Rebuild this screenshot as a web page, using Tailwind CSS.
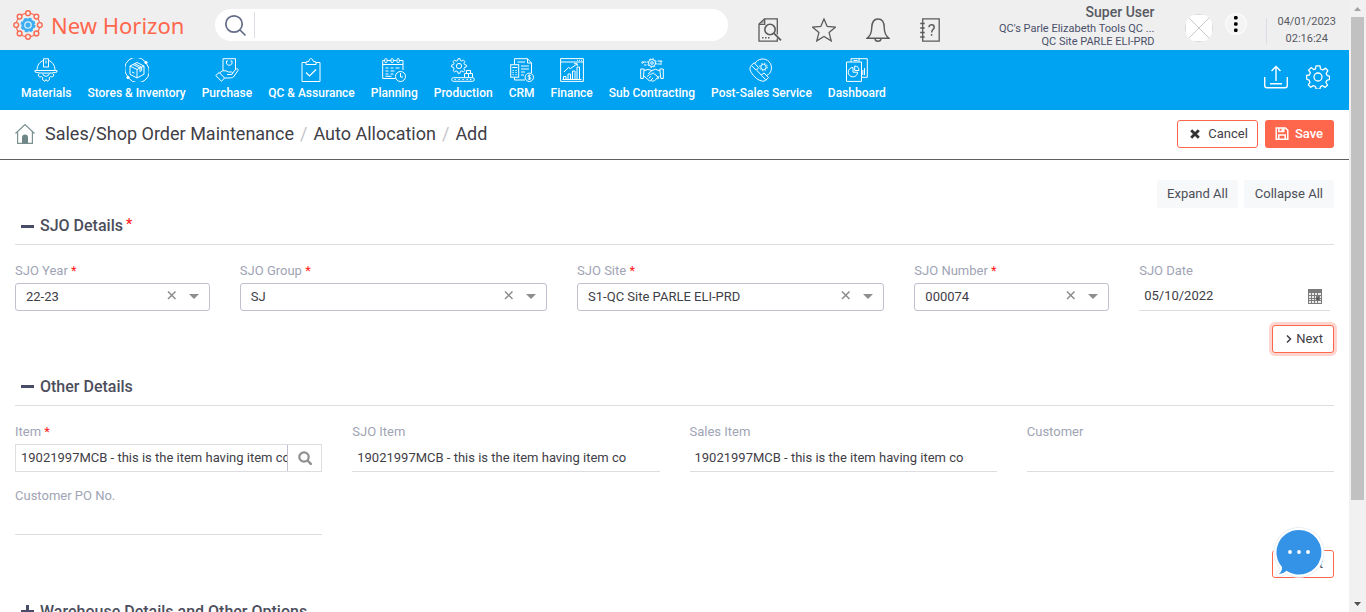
<!DOCTYPE html>
<html lang="en">
<head>
<meta charset="utf-8">
<meta name="viewport" content="width=device-width, initial-scale=1">
<title>New Horizon - Auto Allocation</title>
<script src="https://cdn.jsdelivr.net/npm/@tailwindcss/browser@4"></script>
</head>
<body class="flex h-screen overflow-hidden bg-white font-['Roboto',sans-serif] text-[13px] leading-5 text-[#3f4047]">

<div class="relative flex h-full min-w-0 flex-1 flex-col overflow-hidden">

  <!-- Top bar -->
  <header class="flex h-[50px] shrink-0 items-center bg-[#efefef] pl-[13px] pr-[13px]">
    <a href="#" class="flex w-[202px] shrink-0 items-center gap-2 font-['Noto_Sans',sans-serif] text-[22px] leading-8 text-[#ff674d]">
      <svg class="size-[30px] shrink-0" viewBox="0 0 30 30" fill="none" stroke="#f76b54" stroke-width="1.4">
        <circle cx="15" cy="15" r="11.8" stroke-width="1.2"/>
        <g fill="#efefef">
          <circle cx="15" cy="3.200" r="2.400"/><circle cx="23.400" cy="6.600" r="2.400"/><circle cx="26.800" cy="15" r="2.400"/><circle cx="23.400" cy="23.400" r="2.400"/>
          <circle cx="15" cy="26.800" r="2.400"/><circle cx="6.600" cy="23.400" r="2.400"/><circle cx="3.200" cy="15" r="2.400"/><circle cx="6.600" cy="6.600" r="2.400"/>
        </g>
        <circle cx="15" cy="15" r="6.500" fill="#3eaef0" stroke="#3eaef0" stroke-width="2" stroke-dasharray="2.900 2.205"/>
        <circle cx="15" cy="15" r="6.200" fill="#3eaef0" stroke="none"/>
        <circle cx="15" cy="15" r="3.200" stroke="#d9eefb" stroke-width="1.300"/>
      </svg>
      <span class="whitespace-nowrap">New Horizon</span>
    </a>
    <label class="flex h-8 w-[513px] items-center rounded-full bg-white">
      <svg class="ml-2 size-6 shrink-0" viewBox="0 0 24 24" fill="none" stroke="#636c88" stroke-width="1.7"><circle cx="11" cy="11" r="8.2"/><path d="M17 17l5 5" stroke-linecap="round"/></svg>
      <input type="search" aria-label="Search" class="ml-[7px] h-[26px] min-w-0 flex-1 border-l border-[#dddde6] px-3 outline-none">
    </label>
    <div class="ml-[30px] flex items-center gap-[30px] pt-2.5 text-[#5b5b5d]">
      <button aria-label="Search document"><svg class="block size-6" viewBox="0 0 24 24" fill="none" stroke="currentColor" stroke-width="1.3"><path d="M19.3 16.5V.8H6.5L1 6v17.2h18.3v-3"/><path d="M6.7 1v5.3H1"/><path d="M2 5.3L5.8 1.8V5.3z" fill="currentColor" fill-opacity=".5" stroke="none"/><circle cx="12" cy="11.5" r="5.2" stroke-width="1.6" fill="#efefef"/><path d="M16 15.3l7 7" stroke-width="1.8"/><path d="M4 19.8h1.5M7 19.8h1.5M10 19.8h1.5" stroke-width="1.6"/></svg></button>
      <button aria-label="Favourites"><svg class="block size-6" viewBox="0 0 24 24" fill="none" stroke="currentColor" stroke-width="1.3"><path d="M12 .9l3.2 7.6 8.1.7-6.2 5.4 2.1 8.3-7.2-4.4-7.2 4.4 2.1-8.3L.7 9.2l8.1-.7z"/></svg></button>
      <button aria-label="Notifications"><svg class="block size-6" viewBox="0 0 24 24" fill="none" stroke="currentColor" stroke-width="1.4"><path d="M1 20.3c2.700-2 4.700-4.200 4.700-10.300C5.700 4 8.500 1 12 1s6.300 3 6.300 9c0 6.100 2 8.300 4.700 10.300z"/><path d="M9 20.500a3 2.800 0 0 0 6 0"/></svg></button>
      <button aria-label="Help"><svg class="block h-6 w-5" viewBox="3 0 20 24" fill="none" stroke="currentColor" stroke-width="1.3"><path d="M5.700.8h16.500v22.400H5.700z"/><path d="M3.200 5.500h4.500M3.200 10h4.500M3.200 14.500h4.500M3.200 19h4.500" stroke-width="1.5"/><path d="M12 9.200c0-3.400 5.200-3.400 5.200.1 0 2.300-2.600 2.300-2.600 5.100M14.600 16v1.700" stroke-width="1.5"/></svg></button>
    </div>
    <div class="ml-auto text-right text-[11px] leading-[13px] text-[#4a506a]">
      <div class="pt-px text-[14px] leading-[18px] font-medium text-[#575962]">Super User</div>
      <div class="pt-px">QC's Parle Elizabeth Tools QC ...</div>
      <div>QC Site PARLE ELI-PRD</div>
    </div>
    <div role="img" aria-label="Profile picture" class="ml-[31px] mt-1.5 size-7 overflow-hidden rounded-full bg-white">
      <svg class="size-7" viewBox="0 0 28 28" stroke="#c9c9c9" fill="none"><path d="M4 4l20 20M24 4L4 24"/><path d="M0 .5h28M0 27.500h28M.5 0v28M27.500 0v28" stroke="#d8d8d8"/></svg>
    </div>
    <button aria-label="More" class="ml-3 mb-0.5 flex size-[22px] items-center justify-center rounded-full border border-white/70 bg-[#f4f4f4]">
      <svg class="h-[18px] w-1" viewBox="0 0 4 18" fill="#000"><rect y="1" width="3.600" height="3.600" rx="1.300"/><rect y="7.200" width="3.600" height="3.600" rx="1.300"/><rect y="13.400" width="3.600" height="3.600" rx="1.300"/></svg>
    </button>
    <div class="ml-[19px] mt-3 h-[26px] w-px bg-[#dcdce6]"></div>
    <div class="ml-2.5 mt-2.5 text-center text-[11px] leading-[17px] text-[#575962]">04/01/2023<br>02:16:24</div>
  </header>

  <!-- Module navigation -->
  <nav class="flex h-[60px] shrink-0 items-start bg-[#00a2f2] pl-[13px] pr-[19px] text-[12px] leading-4 font-medium text-white">
    <a href="#" class="flex flex-col items-center gap-[3px] px-2 pt-2 whitespace-nowrap"><svg class="size-6" viewBox="0 0 24 24" fill="none" stroke="#fff" stroke-width="1"><path d="M1 12.500h22v1.500c-3 1.500-19 1.500-22 0z"/><path d="M3 12.500C3 7 6 3.500 9.500 2.500M21 12.500c0-5.500-3-9-6.500-10M9.500 9V.8h5V9zM12 2.500v3"/><path d="M5.500 15.500L4 17l1.500 2 2-.4 1.300 1-.3 2 2.300 1.700 1.200-1.800 1.200 1.800 2.300-1.700-.3-2 1.300-1 2 .4L20 17l-1.500-1.500M8.500 15.500a3.600 3.600 0 0 0 7 0"/></svg>Materials</a>
    <a href="#" class="flex flex-col items-center gap-[3px] px-2 pt-2 whitespace-nowrap"><svg class="size-6" viewBox="0 0 24 24" fill="none" stroke="#fff" stroke-width="1"><path d="M20 3.500A11.300 11.300 0 0 0 2.300 18M4 20.500A11.300 11.300 0 0 0 21.700 6"/><circle cx="21" cy="4.500" r="1.200" fill="#fff"/><circle cx="3" cy="19.500" r="1.200" fill="#fff"/><path d="M5 8l7-3.500L19 8v8.300L12 20l-7-3.700zM5 8l7 3.500L19 8M12 11.500V20M8 6.500l7 3.500v3.500l1.700-.9V9.200L9.700 5.700M7 14l2.500 1.200"/></svg>Stores &amp; Inventory</a>
    <a href="#" class="flex flex-col items-center gap-[3px] px-2 pt-2 whitespace-nowrap"><svg class="size-6" viewBox="0 0 24 24" fill="none" stroke="#fff" stroke-width="1"><path d="M8 13V.7h12.500V12"/><path d="M11.500 3v2c0 3 5.500 3 5.500 0V3M11.500 3h1.500M15.500 3H17"/><path d="M.7 17.500l3.500-3L9.500 20 6.500 23.300z"/><path d="M4.500 15l3-2.200h3.500l2.500 1.200h3c1.500 0 1.500 2.500 0 2.500H12M16.500 16.500l4-5c1.500-1.300 3.300-.5 2.500 1L18.500 19c-1 1-4.500 1-9 1"/></svg>Purchase</a>
    <a href="#" class="flex flex-col items-center gap-[3px] px-2 pt-2 whitespace-nowrap"><svg class="size-6" viewBox="0 0 24 24" fill="none" stroke="#fff" stroke-width="1"><path d="M7 4.500H3v19h18v-19h-4"/><path d="M7 6.500V4l2.800-.7c.5-3.500 3.900-3.500 4.400 0L17 4v2.500z"/><path d="M7 14.500l3.500 3.500 6.500-6.500" stroke-width="1.200"/></svg>QC &amp; Assurance</a>
    <a href="#" class="flex flex-col items-center gap-[3px] px-2 pt-2 whitespace-nowrap"><svg class="size-6" viewBox="0 0 24 24" fill="none" stroke="#fff" stroke-width="1"><path d="M13.500 20.500H.7v-18h2M5 2.500h4M11.500 2.500h3M17 2.500h4V12M.7 6.500H21"/><rect x="2.700" y=".6" width="2.300" height="4" rx="1"/><rect x="9" y=".6" width="2.300" height="4" rx="1"/><rect x="15" y=".6" width="2.300" height="4" rx="1"/><path d="M3.500 10h3M8.500 10h3M13.500 10h4M3.500 13h3M8.500 13h4M3.500 16h3M8.500 16h3M3.500 18.300h6"/><circle cx="18.500" cy="18.500" r="5"/><path d="M18.500 15v4h2.500"/></svg>Planning</a>
    <a href="#" class="flex flex-col items-center gap-[3px] px-2 pt-2 whitespace-nowrap"><svg class="size-6" viewBox="0 0 24 24" fill="none" stroke="#fff" stroke-width="1"><path d="M7 .7h2l.4 1.800 1.500.6 1.600-1 1.400 1.400-1 1.600.6 1.500 1.800.4v2l-1.800.4-.6 1.500 1 1.600-1.400 1.400-1.600-1-1.500.6L9 15.300H7l-.4-1.800-1.500-.6-1.600 1-1.400-1.400 1-1.600-.6-1.500L.7 9V7l1.800-.4.6-1.500-1-1.600 1.400-1.400 1.600 1 1.500-.6z"/><circle cx="8" cy="8" r="2.600"/><rect x=".7" y="19.700" width="22.600" height="3.600" rx="1.800"/><path d="M3.500 21.500h1.300M7.500 21.500h1.300M11.500 21.500h1.300M15.500 21.500h1.300M19 21.500h1.300" /><path d="M13.500 19.500v-4h4v4M17.500 19.500v-4h4v4M15.500 15.500v-3h4v3"/></svg>Production</a>
    <a href="#" class="flex flex-col items-center gap-[3px] px-2 pt-2 whitespace-nowrap"><svg class="size-6" viewBox="0 0 24 24" fill="none" stroke="#fff" stroke-width="1"><path d="M4.500 6V.7h13L21.500 5v10M17.500.7V5h4M4.500 19.500V22H15"/><rect x=".7" y="6.700" width="8" height="12.500"/><path d="M2.300 9.500h5M2.500 12.500h1.200M5.500 12.500h1.200M2.500 14.500h1.200M5.500 14.500h1.200M2.500 16.700h1.200M5.500 16.700h1.200M7.500 4H15M11 8h8M11 11h8M11 14h4M11 17h3"/><circle cx="19.300" cy="19.300" r="4.200"/><path d="M20.800 17.800c-1-1-3-.7-2.700.6.3 1.100 2.500.6 2.700 1.800.1 1.200-2 1.500-3 .5M19.300 16.500v5.600"/></svg>CRM</a>
    <a href="#" class="flex flex-col items-center gap-[3px] px-2 pt-2 whitespace-nowrap"><svg class="size-6" viewBox="0 0 24 24" fill="none" stroke="#fff" stroke-width="1"><path d="M.6.6h22.800v22.800H.6zM.6 4h22.800M17 2.300h1M19 2.300h1M21 2.300h1" /><path d="M3.500 21.500v-3h2.500v3M8 21.500V16h2.500v5.500M12.500 21.500V13H15v8.500M17 21.500V9h2.500v12.500M2.500 21.500h19M4 14l4.500-4.500 2 1L17 6M14 5.700h3.200V8"/></svg>Finance</a>
    <a href="#" class="flex flex-col items-center gap-[3px] px-2 pt-2 whitespace-nowrap"><svg class="size-6" viewBox="0 0 24 24" fill="none" stroke="#fff" stroke-width="1"><circle cx="12" cy="5" r="3.500"/><circle cx="12" cy="5" r="4.300" stroke-dasharray="1.700 1.670"/><circle cx="12" cy="5" r="1.300"/><path d="M6.500 4H3M6.500 7H4M17.500 3H20M17.500 6H22"/><circle cx="2.500" cy="4.500" r=".8"/><circle cx="21" cy="3.500" r=".8"/><path d="M.7 11v9.500h2.500l1-9.500zM23.300 11v9.500h-2.500l-1-9.500z"/><path d="M4.200 12.500L8 11.500l4 1 3.500-1.200 4.300 1.500M12 12.500l-3.500 3c1 1.500 3 1 4.500-.7l5.500 4.500c.8 1-.7 2-1.700 1M4 18l5 4.500c1 .7 2 .3 2-.5M7 18.500l2-1.500M8.800 20.300l2.200-2M11 22l2-2M11 22.500c2 1.500 4.500 0 5.800-2.200l2.700-2"/></svg>Sub Contracting</a>
    <a href="#" class="flex flex-col items-center gap-[3px] px-2 pt-2 whitespace-nowrap"><svg class="size-6" viewBox="0 0 24 24" fill="none" stroke="#fff" stroke-width="1"><path d="M6 5.500A8.800 8.800 0 1 1 17.500 17.700"/><circle cx="14.500" cy="9" r="2.700"/><circle cx="14.500" cy="9" r="3.800" stroke-dasharray="1.500 1.490"/><path d="M2.300 7.500L5 4.700l4.500 4.800-2 2.500 4.700 5 2.800-2 4.500 4.500-3 3c-3.500 2-8.500-1-12-5S-.3 10 2.300 7.500zM2.300 7.500L7 12M12.200 17.300l4.500 4.500"/></svg>Post-Sales Service</a>
    <a href="#" class="flex flex-col items-center gap-[3px] px-2 pt-2 whitespace-nowrap"><svg class="size-6" viewBox="0 0 24 24" fill="none" stroke="#fff" stroke-width="1"><path d="M1.500 4h15v19.400h-15z"/><path d="M6 4V.7h16.300v18.600h-5.800M8.500 2.500h4M14 .7V4"/><path d="M19.500 10v7M17.800 12v5" /><path d="M8 9.500v4.700h4.600A4.700 4.700 0 1 1 8 9.500z"/><path d="M9.700 8v4.500H14A4.500 4.500 0 0 0 9.700 8z"/></svg>Dashboard</a>
    <div class="ml-auto flex items-center gap-[18px] pt-[15px]">
      <button aria-label="Upload"><svg class="block size-6" viewBox="0 0 24 24" fill="none" stroke="#fff" stroke-width="1.400"><path d="M.7 12v8.500c0 1.500 1 2.300 2.300 2.300h18c1.300 0 2.300-.8 2.300-2.300V12M6 18.700h12M12 16V1.700M7.500 6L12 1.500 16.500 6"/></svg></button>
      <button aria-label="Settings"><svg class="block size-6" viewBox="0 0 24 24" fill="none" stroke="#fff" stroke-width="1.300" stroke-linejoin="round"><circle cx="12" cy="12" r="4"/><path d="M10 .8h4l.5 3.200 2.400 1 2.700-1.900 2.300 2.600-1.700 2.700 1 2.200 2.300.5v3.400l-2.700.8-.9 2.200 1.700 2.500-2.400 2.400-2.700-1.700-2 .9-.6 2.600h-3.800l-.6-2.700-2.200-.9-2.600 1.700-2.400-2.400 1.700-2.500-1-2.300L.6 14v-3.500l2.700-.5 1-2.300-1.700-2.600 2.500-2.500L7.700 4.500 9.500 4z"/></svg></button>
    </div>
  </nav>

  <!-- Breadcrumb and page actions -->
  <div class="flex h-[50px] shrink-0 items-center border-b border-[#5d5f62] px-[15px]">
    <a href="#" aria-label="Home"><svg class="mb-0.5 block h-[22px] w-5" viewBox="0 0 20 22" fill="none" stroke="#7b9192" stroke-width="1.200"><path d="M.5 10.500L10 1.500l9.500 9M2.600 9v11.400h14.800V9"/><path d="M7 20.400v-6a3 3 0 0 1 6 0v6z" fill="#6f8788" stroke="none"/></svg></a>
    <div class="flex min-w-0 items-center gap-1.5 pb-0.5 pl-2.5 text-[18px] leading-6 whitespace-nowrap text-[#3f4047]">
      <a href="#">Sales/Shop Order Maintenance</a><span class="text-[#c5c5cb]">/</span><a href="#">Auto Allocation</a><span class="text-[#c5c5cb]">/</span><span>Add</span>
    </div>
    <div class="ml-auto flex gap-[7px] pb-0.5">
      <button class="flex h-7 items-center gap-2 rounded-[3px] border border-[#ff674d] bg-white pr-[9px] pl-3"><svg class="size-2.5" viewBox="0 0 10 10" stroke="#333" stroke-width="2.800"><path d="M1.200 1.200l7.600 7.600M8.800 1.200L1.200 8.800"/></svg>Cancel</button>
      <button class="flex h-7 items-center gap-1.5 rounded-[3px] bg-[#ff674d] pr-[11px] pl-2.5 font-medium text-white"><svg class="h-[13px] w-3.5" viewBox="0 0 14 13" fill="none" stroke="#fff" stroke-width="1.500"><path d="M1.200.9h9.200l2.400 2.400v8.900H1.200zM3.800.9v3.600h5V.9M3.800 12V8h6.400v4"/><path d="M6.500 1h2v3h-2z" fill="#fff" stroke="none"/></svg>Save</button>
    </div>
  </div>

  <main class="min-h-0 flex-1 overflow-hidden px-[15px] pt-5">
    <div class="flex justify-end gap-1.5 text-[#4c4e57]">
      <button class="h-7 rounded-[3px] bg-[#f7f8fa] px-2.5">Expand All</button>
      <button class="h-7 rounded-[3px] bg-[#f7f8fa] px-[11px]">Collapse All</button>
    </div>

    <section>
      <h2 class="flex h-[37px] items-center border-b border-[#dedee2] pl-1.5 text-[16px] font-medium text-[#4c4e5c]">
        <button class="flex items-center gap-1.5"><svg class="h-[3px] w-[13px]" viewBox="0 0 13 3"><path d="M0 0h13v3H0z" fill="#484c66"/></svg>SJO Details</button><span class="pb-1 pl-[3px] text-[14px] text-[#ff1a1a]">*</span>
      </h2>
      <div class="grid grid-cols-12 gap-x-[30px] pt-4">
        <div class="col-span-2 flex flex-col gap-0.5">
          <label for="year" class="text-[#a0a4b5]">SJO Year <span class="text-[#ff1a1a]">*</span></label>
          <div class="relative">
            <select id="year" class="block h-7 w-full appearance-none rounded-[3px] border border-[#c1c0ce] bg-white pr-14 pl-2.5"><option>22-23</option></select>
            <button aria-label="Clear SJO Year" class="absolute top-2 right-8 text-[#8e8e8e]"><svg class="size-3" viewBox="0 0 12 12" stroke="currentColor" stroke-width="1.500"><path d="M2 0.500l7.500 7.500M9.500 .5L2 8"/></svg></button>
            <svg class="pointer-events-none absolute top-[11px] right-[11px] h-[5px] w-2.5" viewBox="0 0 10 5"><path d="M0 0h10L5 5z" fill="#8e8e8e"/></svg>
          </div>
        </div>
        <div class="col-span-3 flex flex-col gap-0.5">
          <label for="group" class="text-[#a0a4b5]">SJO Group <span class="text-[#ff1a1a]">*</span></label>
          <div class="relative">
            <select id="group" class="block h-7 w-full appearance-none rounded-[3px] border border-[#c1c0ce] bg-white pr-14 pl-2.5"><option>SJ</option></select>
            <button aria-label="Clear SJO Group" class="absolute top-2 right-8 text-[#8e8e8e]"><svg class="size-3" viewBox="0 0 12 12" stroke="currentColor" stroke-width="1.500"><path d="M2 0.500l7.500 7.500M9.500 .5L2 8"/></svg></button>
            <svg class="pointer-events-none absolute top-[11px] right-[11px] h-[5px] w-2.5" viewBox="0 0 10 5"><path d="M0 0h10L5 5z" fill="#8e8e8e"/></svg>
          </div>
        </div>
        <div class="col-span-3 flex flex-col gap-0.5">
          <label for="site" class="text-[#a0a4b5]">SJO Site <span class="text-[#ff1a1a]">*</span></label>
          <div class="relative">
            <select id="site" class="block h-7 w-full appearance-none rounded-[3px] border border-[#c1c0ce] bg-white pr-14 pl-2.5"><option>S1-QC Site PARLE ELI-PRD</option></select>
            <button aria-label="Clear SJO Site" class="absolute top-2 right-8 text-[#8e8e8e]"><svg class="size-3" viewBox="0 0 12 12" stroke="currentColor" stroke-width="1.500"><path d="M2 0.500l7.500 7.500M9.500 .5L2 8"/></svg></button>
            <svg class="pointer-events-none absolute top-[11px] right-[11px] h-[5px] w-2.5" viewBox="0 0 10 5"><path d="M0 0h10L5 5z" fill="#8e8e8e"/></svg>
          </div>
        </div>
        <div class="col-span-2 flex flex-col gap-0.5">
          <label for="number" class="text-[#a0a4b5]">SJO Number <span class="text-[#ff1a1a]">*</span></label>
          <div class="relative">
            <select id="number" class="block h-7 w-full appearance-none rounded-[3px] border border-[#c1c0ce] bg-white pr-14 pl-2.5"><option>000074</option></select>
            <button aria-label="Clear SJO Number" class="absolute top-2 right-8 text-[#8e8e8e]"><svg class="size-3" viewBox="0 0 12 12" stroke="currentColor" stroke-width="1.500"><path d="M2 0.500l7.500 7.500M9.500 .5L2 8"/></svg></button>
            <svg class="pointer-events-none absolute top-[11px] right-[11px] h-[5px] w-2.5" viewBox="0 0 10 5"><path d="M0 0h10L5 5z" fill="#8e8e8e"/></svg>
          </div>
        </div>
        <div class="col-span-2 flex flex-col gap-0.5 pr-1">
          <label for="date" class="text-[#a0a4b5]">SJO Date</label>
          <div class="flex h-7 items-center border-b border-[#dedee2] pr-2 pl-[5px]">
            <input id="date" value="05/10/2022" class="min-w-0 flex-1 pb-0.5 outline-none">
            <button aria-label="Open calendar"><svg class="block h-[15px] w-3.5" viewBox="0 0 14 15"><path d="M0 0h14v15H0z" fill="#7b7b7b"/><g fill="#fff"><path d="M1 4h2v2H1zM4 4h2v2H4zM7 4h2v2H7zM10 4h3v2h-3zM1 7h2v2H1zM4 7h2v2H4zM7 7h1v2H7zM12 7h1v2h-1zM1 10h2v1H1zM4 10h2v1H4zM7 10h1v1H7zM12 10h1v1h-1zM1 12h2v2H1zM4 12h2v2H4zM7 12h2v2H7zM10 12h3v2h-3z" fill-opacity=".85"/></g><path d="M8.500 8.500h2.500v2.500H8.500z" fill="#555"/></svg></button>
          </div>
        </div>
      </div>
      <div class="flex justify-end pt-3.5">
        <button class="flex h-7 items-center gap-1 rounded-[3px] border border-[#ff674d] bg-white pr-2.5 pl-[13px] ring-3 ring-[#ffd5cf]"><svg class="h-2 w-1.5" viewBox="0 0 6 8" fill="none" stroke="#3f4047" stroke-width="1.500"><path d="M1 .5L4.500 4 1 7.500"/></svg>Next</button>
      </div>
    </section>

    <section class="pt-[15px]">
      <h2 class="flex h-[38px] items-center border-b border-[#dedee2] pl-1.5 text-[16px] font-medium text-[#4c4e5c]">
        <button class="flex items-center gap-1.5"><svg class="h-[3px] w-[13px]" viewBox="0 0 13 3"><path d="M0 0h13v3H0z" fill="#484c66"/></svg>Other Details</button>
      </h2>
      <div class="grid grid-cols-4 gap-x-[30px] gap-y-3.5 pt-4">
        <div class="flex flex-col gap-0.5">
          <label for="item" class="text-[#a0a4b5]">Item <span class="text-[#ff1a1a]">*</span></label>
          <div class="flex h-7 border border-[#dedee2]">
            <input id="item" value="19021997MCB - this is the item having item code" class="min-w-0 flex-1 pl-[5px] outline-none">
            <button aria-label="Find item" class="flex w-[34px] items-center justify-center border-l border-[#c1c0ce]"><svg class="size-3.5" viewBox="0 0 14 14" fill="none" stroke="#8f8f8f"><circle cx="6" cy="6" r="4.700" stroke-width="2.200"/><path d="M9.500 9.500l3.300 3.300" stroke-width="2.400" stroke-linecap="round"/></svg></button>
          </div>
        </div>
        <div class="flex flex-col gap-0.5">
          <label for="sjoitem" class="text-[#a0a4b5]">SJO Item</label>
          <input id="sjoitem" readonly value="19021997MCB - this is the item having item co" class="h-7 w-full border-b border-[#dedee2] pl-[5px] outline-none">
        </div>
        <div class="flex flex-col gap-0.5">
          <label for="salesitem" class="text-[#a0a4b5]">Sales Item</label>
          <input id="salesitem" readonly value="19021997MCB - this is the item having item co" class="h-7 w-full border-b border-[#dedee2] pl-[5px] outline-none">
        </div>
        <div class="flex flex-col gap-0.5">
          <label for="customer" class="text-[#a0a4b5]">Customer</label>
          <input id="customer" readonly class="h-7 w-full border-b border-[#dedee2] pl-[5px] outline-none">
        </div>
        <div class="flex flex-col gap-px">
          <label for="po" class="text-[#a0a4b5]">Customer PO No.</label>
          <input id="po" class="h-7 w-full border-b border-[#dedee2] pl-[5px] outline-none">
        </div>
      </div>
      <div class="flex justify-end pt-[15px]">
        <button class="flex h-7 items-center gap-1 rounded-[3px] border border-[#ff674d] bg-white pr-2.5 pl-[13px]"><svg class="h-2 w-1.5" viewBox="0 0 6 8" fill="none" stroke="#3f4047" stroke-width="1.500"><path d="M1 .5L4.500 4 1 7.500"/></svg>Next</button>
      </div>
    </section>

    <section class="pt-[15px]">
      <h2 class="flex h-[38px] items-center border-b border-[#dedee2] pl-1.5 text-[16px] font-medium text-[#4c4e5c]">
        <button class="flex items-center gap-1.5"><svg class="size-[13px]" viewBox="0 0 13 13"><path d="M5 0h3v5h5v3H8v5H5V8H0V5h5z" fill="#484c66"/></svg>Warehouse Details and Other Options</button>
      </h2>
    </section>
  </main>

  <!-- Chat launcher -->
  <button aria-label="Open chat" class="absolute right-6 bottom-[34px] size-[52px]">
    <svg class="size-full" viewBox="0 0 52 52"><g stroke-linejoin="round"><path d="M26 4a22.300 22.300 0 1 1-12.500 40.700C11 47 8 48 5.500 48c2.500-1.500 3.700-4 3.500-7A22.300 22.300 0 0 1 26 4z" fill="#fff" stroke="#eaf0f6" stroke-width="6"/><path d="M26 4a22.300 22.300 0 1 1-12.500 40.700C11 47 8 48 5.500 48c2.500-1.500 3.700-4 3.500-7A22.300 22.300 0 0 1 26 4z" fill="#3493e6" stroke="#fff" stroke-width="4" paint-order="stroke"/></g><g fill="#fff"><circle cx="17" cy="26" r="1.900"/><circle cx="26" cy="26" r="1.900"/><circle cx="35" cy="26" r="1.900"/></g></svg>
  </button>
</div>

<!-- Scroll bar -->
<div aria-hidden="true" class="flex w-[17px] shrink-0 flex-col bg-[#f1f1f1]">
  <div class="flex h-[17px] items-center justify-center"><svg class="h-1 w-[7px]" viewBox="0 0 7 4"><path d="M0 4L3.500 0 7 4z" fill="#a3a3a3"/></svg></div>
  <div class="flex-1 px-0.5"><div class="h-[83.6%] bg-[#c1c1c1]"></div></div>
  <div class="flex h-[17px] items-center justify-center"><svg class="h-1 w-[7px]" viewBox="0 0 7 4"><path d="M0 0h7L3.500 4z" fill="#505050"/></svg></div>
</div>
</body>
</html>
